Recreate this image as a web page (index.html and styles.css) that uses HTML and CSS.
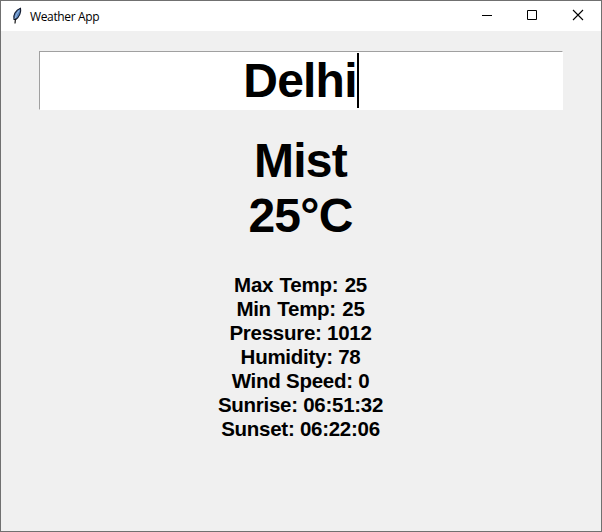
FILE: index.html
```html
<!DOCTYPE html>
<html lang="en">
<head>
<meta charset="utf-8">
<title>Weather App</title>
<link rel="stylesheet" href="styles.css">
</head>
<body>
<div class="window">
  <header class="titlebar">
    <svg class="feather" width="10" height="18" viewBox="0 0 10 18" aria-hidden="true">
      <path d="M2 12.500C.8 8.500 3.500 3 8.500 1.300C9.500 5 7.300 10 3.800 12.500Z" fill="#5b86bd" stroke="#10172a" stroke-width="1.100"/>
      <path d="M7 3.500Q3.800 7.500 3 12" fill="none" stroke="#9dbde6" stroke-width="1"/>
      <path d="M3.500 11.500L3 16.500" fill="none" stroke="#111" stroke-width="1.200"/>
    </svg>
    <span class="title">Weather App</span>
    <div class="controls">
      <svg width="46" height="30" viewBox="0 0 46 30"><path d="M18 14.500H28" stroke="#000"/></svg>
      <svg width="45" height="30" viewBox="0 0 45 30"><path d="M17.500 9.500h9v9h-9z" fill="none" stroke="#000"/></svg>
      <svg width="46" height="30" viewBox="0 0 46 30"><path d="M18 9l10 10M28 9L18 19" stroke="#000" stroke-width="1.100"/></svg>
    </div>
  </header>
  <main class="content">
    <div class="entry"><span>Delhi</span><i class="caret"></i></div>
    <div class="summary"><div class="condition">Mist</div><div class="temp">25°C</div></div>
    <div class="details">
      <div class="spaced">Max Temp: 25</div>
      <div class="spaced">Min Temp: 25</div>
      <div>Pressure: 1012</div>
      <div>Humidity: 78</div>
      <div>Wind Speed: 0</div>
      <div>Sunrise: 06:51:32</div>
      <div>Sunset: 06:22:06</div>
    </div>
  </main>
</div>
</body>
</html>
```
FILE: styles.css
```css
* { box-sizing: border-box; }
body { margin: 0; }
.window {
  width: 602px;
  height: 532px;
  border: 1px solid #707070;
  background: #f0f0f0;
  color: #000;
  font-family: "Liberation Sans", Arial, sans-serif;
}
.titlebar {
  display: flex;
  align-items: center;
  height: 30px;
  padding-left: 11px;
  background: #fff;
}
.title {
  margin-left: 8px;
  font: 12px "Open Sans", "Noto Sans", sans-serif;
  letter-spacing: -0.35px;
}
.controls { display: flex; margin-left: auto; }
.content { padding: 20px 38px 0; font-weight: bold; text-align: center; }
.entry {
  display: flex;
  justify-content: center;
  width: 524px;
  height: 59px;
  padding-top: 1px;
  border: 1px solid #fff;
  border-top-color: #a0a0a0;
  border-left-color: #a0a0a0;
  background: #fff;
  font-size: 48px;
  letter-spacing: -0.8px;
  line-height: 55px;
}
.caret { width: 2px; height: 55px; background: #000; }
.summary {
  width: 523px;
  margin-top: 23px;
  font-size: 48px;
  letter-spacing: -0.8px;
  line-height: 55px;
}
.details {
  width: 523px;
  margin-top: 30px;
  font-size: 20.5px;
  letter-spacing: -0.27px;
  line-height: 24px;
}
.spaced { word-spacing: 1px; }
```
